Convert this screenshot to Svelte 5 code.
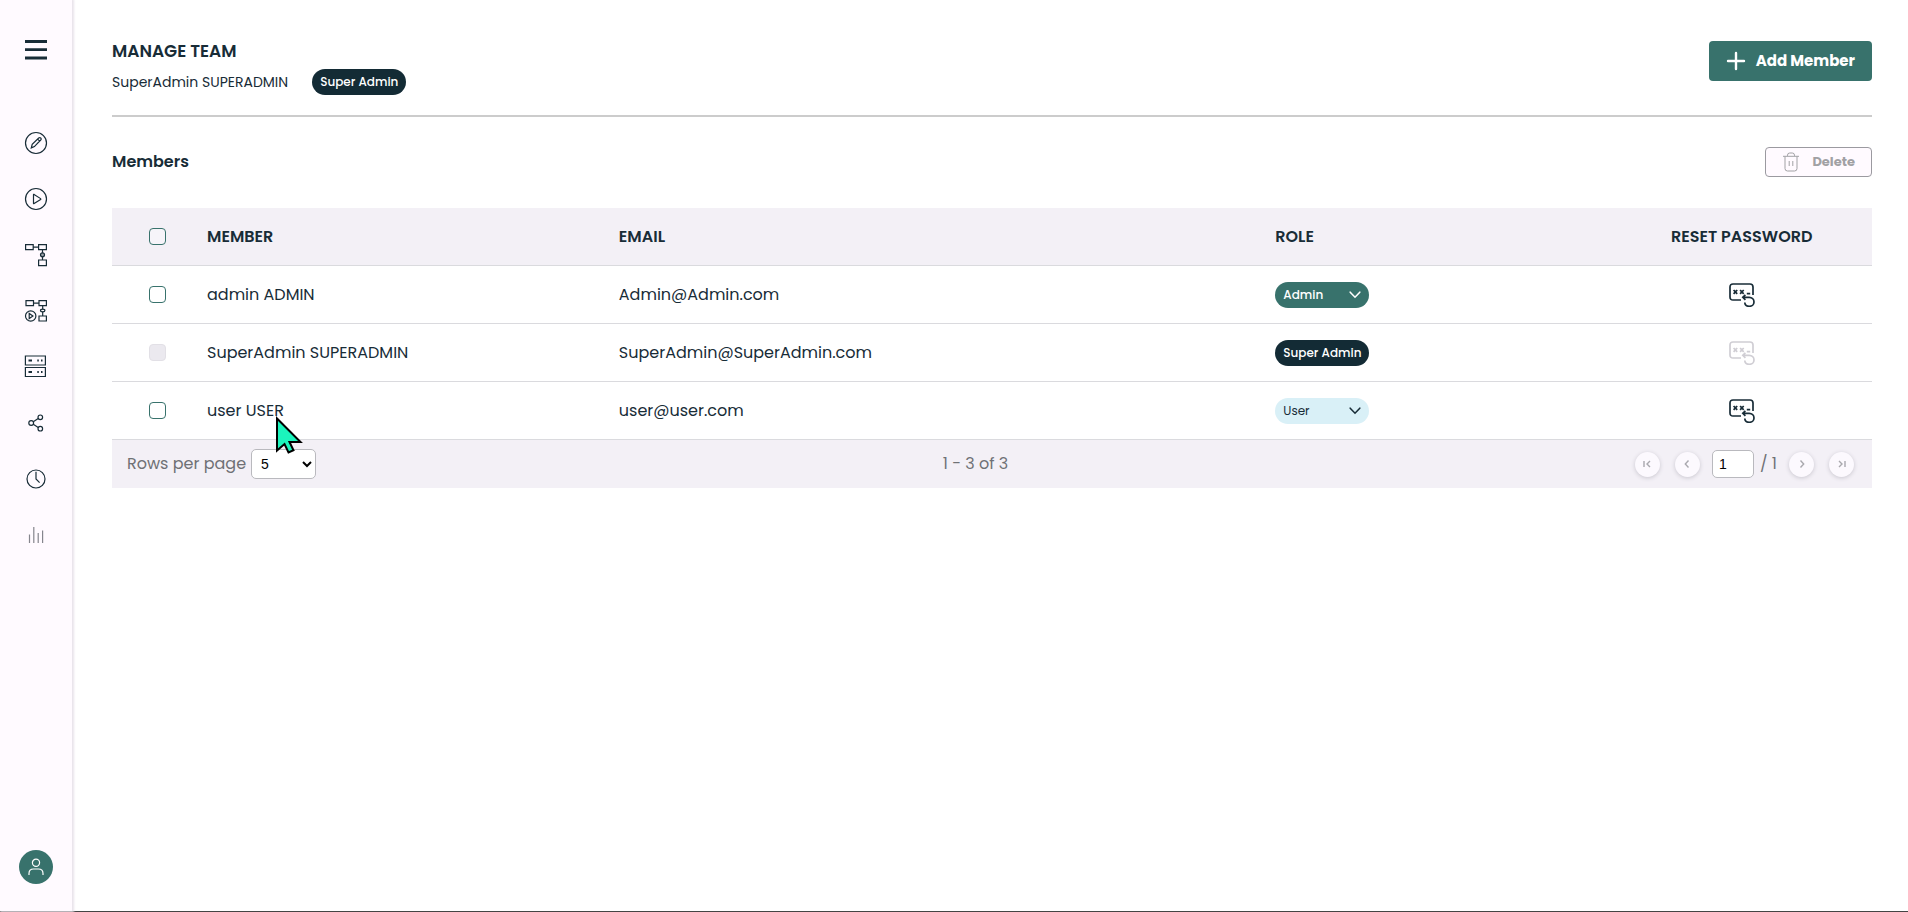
<script lang="ts">
  type Role = 'Admin' | 'User' | 'Super Admin';

  interface Member {
    name: string;
    email: string;
    role: Role;
    selected: boolean;
  }

  let members: Member[] = $state([
    { name: 'admin ADMIN', email: 'Admin@Admin.com', role: 'Admin', selected: false },
    { name: 'SuperAdmin SUPERADMIN', email: 'SuperAdmin@SuperAdmin.com', role: 'Super Admin', selected: false },
    { name: 'user USER', email: 'user@user.com', role: 'User', selected: false }
  ]);

  let rowsPerPage = $state('5');
  let page = $state('1');

  const navItems = ['Edit', 'Run', 'Workflows', 'Workflow runs', 'Servers', 'Share', 'History', 'Statistics'];

  let noneSelected = $derived(!members.some((m) => m.selected));

  function toggleAll(event: Event) {
    const checked = (event.currentTarget as HTMLInputElement).checked;
    members.forEach((m) => {
      if (m.role !== 'Super Admin') m.selected = checked;
    });
  }
</script>

<div class="layout">
  <aside class="sidebar">
    <button class="icon-button menu" aria-label="Menu">
      <svg width="22" height="20" viewBox="0 0 22 20">
        <path d="M0 1.5h22M0 9.7h22M0 18h22" stroke-width="2.8" />
      </svg>
    </button>

    <nav>
      {#each navItems as item, i}
        <a href="#{i}" aria-label={item} class:muted={item === 'Statistics'}>
          <svg width="24" height="24" viewBox="0 0 24 24">
            {#if item === 'Edit'}
              <circle cx="12" cy="12" r="10.5" />
              <path d="M7.3 16.9l.9-3.5 6.5-6.4q1-.9 2 0t0 2l-6.3 6.6zM13.6 8.1l2.1 2" />
            {:else if item === 'Run'}
              <circle cx="12" cy="12" r="10.5" />
              <path d="M9.5 7.6v8.8q0 .6.6.2l6.5-4q.5-.5 0-1l-6.5-4.2q-.6-.3-.6.2z" />
            {:else if item === 'Workflows'}
              <path d="M1.6 1.6h7.6v5H1.6zM14.6 1.6h7.8v5h-7.8zM14.6 17h7.8v5.6h-7.8zM9.2 4.1h5.4M18.5 6.6V17" />
              <circle cx="18.5" cy="11.8" r="2" fill="#9aa1a8" />
            {:else if item === 'Workflow runs'}
              <path d="M2 1.6h7.5v5H2zM15 1.6h7.4v5H15zM15 17h7.4v5H15zM9.5 4.1H15M18.7 6.6V17" />
              <ellipse cx="18.7" cy="11.5" rx="2.2" ry="1.3" fill="#fffaff" />
              <circle cx="6.7" cy="17" r="5.2" />
              <path d="M5.2 14.5v5l3.7-2.5z" />
            {:else if item === 'Servers'}
              <path d="M1.4 1h20v9h-20zM1.4 12.5h20v9h-20z" />
              <path d="M4.5 5.5H8M4.5 17H8M13.3 5.5h1.5M17 5.5h1.5M13.3 17h1.5M17 17h1.5" stroke-width="1.8" />
            {:else if item === 'Share'}
              <circle cx="7.2" cy="12" r="2.4" />
              <circle cx="16.3" cy="6.3" r="2.3" />
              <circle cx="16.3" cy="17.7" r="2.3" />
              <path d="M9.3 10.7l4.9-3.1M9.3 13.3l4.9 3.1" />
            {:else if item === 'History'}
              <circle cx="12" cy="12" r="9" />
              <path d="M12 4.8V12l3.6 3.6" />
            {:else}
              <path d="M5.5 11.5v8.5M9.8 4v16M14.2 10v10M18.6 7.5v12.5" />
            {/if}
          </svg>
        </a>
      {/each}
    </nav>

    <button class="avatar" aria-label="Account">
      <svg width="18" height="18" viewBox="0 0 18 18">
        <circle cx="9" cy="4.8" r="3.6" />
        <path d="M2 17v-1.5q0-4.5 4.5-4.5h5q4.5 0 4.5 4.5V17" />
      </svg>
    </button>
  </aside>

  <main>
    <header>
      <div>
        <h1>MANAGE TEAM</h1>
        <div class="identity">
          <span>SuperAdmin SUPERADMIN</span>
          <span class="pill super">Super Admin</span>
        </div>
      </div>
      <button class="add">
        <svg width="20" height="20" viewBox="0 0 20 20">
          <path d="M10 2v16M2 10h16" stroke-width="2.4" stroke-linecap="round" />
        </svg>
        Add Member
      </button>
    </header>

    <div class="section-head">
      <h2>Members</h2>
      <button class="delete" disabled={noneSelected}>
        <svg width="18" height="20" viewBox="0 0 18 20">
          <path d="M1 4.3h16M3 4.5v12q0 2.5 2.5 2.5h7q2.5 0 2.5-2.5v-12M5.5 4v-.8q0-2.2 2.2-2.2h2.6q2.2 0 2.2 2.2V4M7.2 9v5M10.8 9v5" />
        </svg>
        Delete
      </button>
    </div>

    <table>
      <thead>
        <tr>
          <th class="check"><input type="checkbox" aria-label="Select all members" onchange={toggleAll} /></th>
          <th class="member">MEMBER</th>
          <th class="email">EMAIL</th>
          <th class="role">ROLE</th>
          <th class="reset">RESET PASSWORD</th>
        </tr>
      </thead>
      <tbody>
        {#each members as member}
          <tr>
            <td class="check">
              <input
                type="checkbox"
                aria-label="Select {member.name}"
                disabled={member.role === 'Super Admin'}
                bind:checked={member.selected}
              />
            </td>
            <td>{member.name}</td>
            <td>{member.email}</td>
            <td>
              {#if member.role === 'Super Admin'}
                <span class="pill super">Super Admin</span>
              {:else}
                <span class="role-select" class:user={member.role === 'User'}>
                  <select class="pill" aria-label="Role of {member.name}" bind:value={member.role}>
                    <option>Admin</option>
                    <option>User</option>
                  </select>
                  <svg width="12" height="8" viewBox="0 0 12 8">
                    <path d="M1.2 1.2L6 6.2l4.8-5" stroke-width="1.6" stroke-linecap="round" />
                  </svg>
                </span>
              {/if}
            </td>
            <td class="reset">
              <button class="icon-button" aria-label="Reset password of {member.name}" disabled={member.role === 'Super Admin'}>
                <svg width="26" height="24" viewBox="0 0 26 24" stroke-width="1.7">
                  <path d="M12 17H4q-3 0-3-3V4q0-3 3-3h17q3 0 3 3v8" />
                  <path d="M4.6 7l3.6 3.8M8.2 7l-3.6 3.8M11.1 7l3.6 3.8M14.7 7l-3.6 3.8M17.8 10.7h3.4" />
                  <path d="M16.4 11.8l-2.6 2.5 2.6 2.5M14 14.3h6.200c2.700 0 4.800 2 4.800 4.600s-2.100 4.400-4.700 4.400-4.400-1.600-4.500-3.800" />
                </svg>
              </button>
            </td>
          </tr>
        {/each}
      </tbody>
    </table>

    <footer>
      <label>
        Rows per page
        <select class="page-size" bind:value={rowsPerPage}>
          <option>5</option>
          <option>10</option>
          <option>20</option>
        </select>
      </label>
      <span>1 - 3 of 3</span>
      <div class="pager">
        <button disabled aria-label="First page">
          <svg width="10" height="10" viewBox="0 0 10 10"><path d="M2 2v6M8 2L5 5l3 3" /></svg>
        </button>
        <button disabled aria-label="Previous page">
          <svg width="10" height="10" viewBox="0 0 10 10"><path d="M6.5 1.5L3.3 5l3.2 3.5" /></svg>
        </button>
        <div class="page-number">
          <input type="text" aria-label="Page" bind:value={page} />
          <span>/ 1</span>
        </div>
        <button disabled aria-label="Next page">
          <svg width="10" height="10" viewBox="0 0 10 10"><path d="M3.5 1.5L6.7 5 3.5 8.5" /></svg>
        </button>
        <button disabled aria-label="Last page">
          <svg width="10" height="10" viewBox="0 0 10 10"><path d="M2 2l3 3-3 3M8 2v6" /></svg>
        </button>
      </div>
    </footer>
  </main>

  <svg class="cursor" width="28" height="40" viewBox="0 0 28 40">
    <path d="M2 2.5v32l7.5-6.5 4 8.5 5-2.3-4-8.2h11z" />
  </svg>
</div>

<style>
  :global(body) {
    margin: 0;
    background: #fff;
  }

  .layout {
    position: relative;
    display: flex;
    min-height: 100vh;
    box-sizing: border-box;
    border-bottom: 1px solid #444;
    font-family: Poppins, Inter, sans-serif;
    font-size: 16px;
    line-height: 24px;
    color: #182c37;
  }

  button,
  input,
  select {
    font: inherit;
    box-sizing: border-box;
    margin: 0;
  }

  svg {
    display: block;
    flex: none;
    fill: none;
    stroke: currentColor;
  }

  .sidebar {
    width: 72px;
    flex: none;
    display: flex;
    flex-direction: column;
    align-items: center;
    box-sizing: border-box;
    padding: 40px 0 27px;
    background: #fffaff;
    box-shadow: 1px 0 2px 1px #e9e4eb;
  }

  .icon-button {
    padding: 0;
    border: none;
    background: none;
    color: #182c37;
  }

  nav {
    display: flex;
    flex-direction: column;
    gap: 32px;
    margin-top: 71px;
    flex: 1;
  }

  nav a {
    color: #182c37;
    stroke-width: 1.2;
  }

  nav a.muted {
    color: #85858d;
  }

  .avatar {
    display: flex;
    align-items: center;
    justify-content: center;
    width: 34px;
    height: 34px;
    padding: 0;
    border: none;
    border-radius: 50%;
    background: #38726c;
    color: #fff;
    stroke-width: 1.2;
  }

  main {
    flex: 1;
    padding: 39px 36px 0 40px;
  }

  header {
    display: flex;
    justify-content: space-between;
    align-items: flex-start;
    height: 76px;
    border-bottom: 2px solid #ccc;
  }

  h1,
  h2 {
    margin: 0;
    font-size: 17px;
    font-weight: 600;
    line-height: 24px;
  }

  h2 {
    font-size: 16px;
  }

  .identity {
    display: flex;
    align-items: center;
    gap: 24px;
    margin-top: 6px;
    font-size: 14px;
  }

  .pill {
    display: block;
    width: 94px;
    height: 26px;
    padding: 0 8px;
    border: none;
    border-radius: 13px;
    box-sizing: border-box;
    background: #38726c;
    color: #fff;
    font-size: 12px;
    font-weight: 500;
    line-height: 26px;
    white-space: nowrap;
  }

  .pill.super {
    background: #132b35;
  }

  .add {
    display: flex;
    align-items: center;
    gap: 10px;
    height: 40px;
    margin-top: 2px;
    padding: 0 17px;
    border: none;
    border-radius: 4px;
    background: #38726c;
    color: #fff;
    font-size: 15px;
    font-weight: 700;
  }

  .section-head {
    display: flex;
    justify-content: space-between;
    align-items: center;
    height: 30px;
    margin: 30px 0 31px;
  }

  .delete {
    display: flex;
    align-items: center;
    gap: 12px;
    height: 30px;
    padding: 0 16px;
    border: 1px solid #9b9aa0;
    border-radius: 4px;
    background: #fffaff;
    color: #a1a1a4;
    font-size: 13px;
    font-weight: 700;
  }

  table {
    width: 100%;
    table-layout: fixed;
    border-collapse: separate;
    border-spacing: 0;
  }

  th,
  td {
    height: 57px;
    padding: 0;
    border-bottom: 1px solid #dadade;
    text-align: left;
  }

  th {
    background: #f3f0f6;
    font-weight: 600;
  }

  .member {
    width: 23.4%;
  }

  .email {
    width: 37.3%;
  }

  .role {
    width: 19.1%;
  }

  .check {
    width: 58px;
    padding-left: 37px;
  }

  .reset {
    text-align: center;
  }

  .reset .icon-button {
    display: block;
    margin: 0 auto;
  }

  .reset .icon-button:disabled {
    color: #d0ced4;
  }

  input[type='checkbox'] {
    display: block;
    appearance: none;
    width: 17px;
    height: 17px;
    border: 1px solid #38726c;
    border-radius: 4px;
    background: #fff;
  }

  input[type='checkbox']:checked {
    background: #38726c;
  }

  input[type='checkbox']:disabled {
    border-color: #e2e0e6;
    background: #ebe9ef;
  }

  th input[type='checkbox'] {
    background: #f6f4f9;
  }

  .role-select {
    position: relative;
    display: block;
    width: 94px;
    color: #fff;
  }

  .role-select select {
    appearance: none;
  }

  .role-select svg {
    position: absolute;
    top: 9px;
    right: 8px;
    pointer-events: none;
  }

  .role-select.user,
  .role-select.user select {
    color: #182c37;
  }

  .role-select.user select {
    background: #d9f0f7;
    font-weight: 400;
  }

  footer {
    display: flex;
    justify-content: space-between;
    align-items: center;
    height: 48px;
    padding: 0 18px 0 15px;
    background: #f3f0f6;
    color: #6f7175;
  }

  label {
    display: flex;
    align-items: center;
    gap: 5px;
  }

  .page-size {
    width: 65px;
    height: 30px;
    padding: 0 5px;
    border: 1px solid #b9b9be;
    border-radius: 5px;
    background: #fff;
    color: #000;
    font-family: 'Liberation Sans', sans-serif;
    font-size: 14px;
  }

  .pager {
    display: flex;
    align-items: center;
    justify-content: flex-end;
    gap: 15px;
  }

  .pager button {
    display: flex;
    align-items: center;
    justify-content: center;
    width: 25px;
    height: 25px;
    padding: 0;
    border: none;
    border-radius: 50%;
    background: #fcf9fe;
    color: #a9a8ae;
    stroke-width: 1.4;
    box-shadow: 0 1px 4px #c9c6cf;
  }

  .page-number {
    display: flex;
    align-items: center;
    gap: 6px;
    margin: 0 -3px;
  }

  .page-number input {
    width: 42px;
    height: 28px;
    padding: 0 6px;
    border: 1px solid #b9b9be;
    border-radius: 5px;
    background: #fff;
    color: #000;
    font-family: 'Liberation Sans', sans-serif;
    font-size: 14px;
  }

  .cursor {
    position: absolute;
    top: 416px;
    left: 275px;
    fill: #1bf5bd;
    stroke: #000;
    stroke-width: 2;
    pointer-events: none;
  }
</style>
